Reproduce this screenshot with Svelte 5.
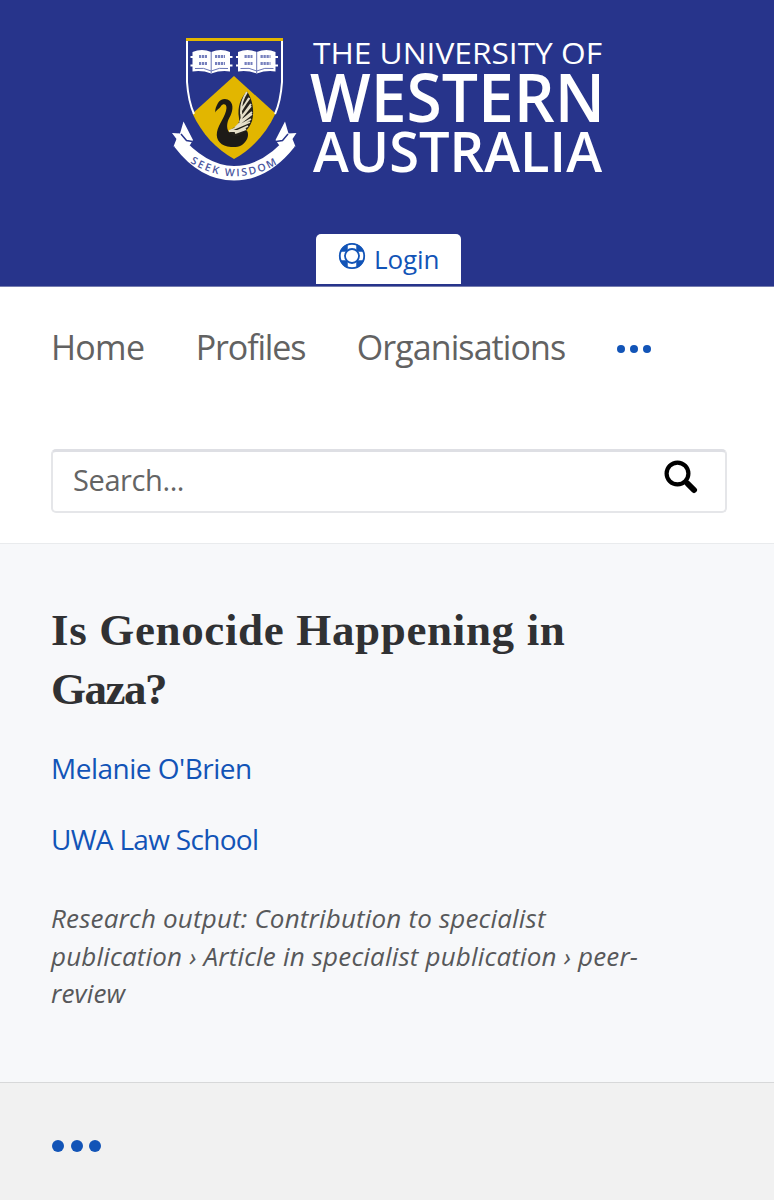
<script>
  const links = [
    { label: 'Home', spacing: -0.7 },
    { label: 'Profiles', spacing: -1.15 },
    { label: 'Organisations', spacing: -0.93 }
  ];
</script>

<header class="banner">
  <svg class="logo" width="434" height="154" viewBox="170 32 434 154" role="img" aria-label="The University of Western Australia">
    <path d="M187 38.500H282V82C281 119 262 145 234 159C206 145 188 119 187 82Z" fill="#27348b" />
    <path d="M234 76L275.500 113.500C266 134 252 149 234 159C216 149 202 134 192.500 113.500Z" fill="#e2b600" />
    <path d="M187 40V82C188 96 190 105 194 114M282 40V82C281 96 279 105 275 114" fill="none" stroke="#fff" stroke-width="2" />
    <path d="M186 39.500H283" stroke="#e2b600" stroke-width="3.200" />
    {#each [0, 45.5] as dx}
      <g transform="translate({dx} 0)">
        <path d="M192.500 52Q202 48 211.200 52Q221 48 230 52V71.500Q221 70 211.200 73.500Q202 70 192.500 71.500Z" fill="#fff" />
        <path d="M190.500 57H194M190.500 65.500H194M228 57H232.500M228 65.500H232.500" stroke="#fff" stroke-width="2" />
        <path d="M211.200 52V73M195 68.500Q204 67 211.200 71Q219 67 228 68.500" fill="none" stroke="#6974b5" stroke-width="1" />
        <path d="M199 56.500H207M199 63.500H207M215 56.500H225M215 63.500H225" stroke="#7680bd" stroke-width="3.200" stroke-dasharray="2.300 .7" />
      </g>
    {/each}
    <path d="M215.300 112.500C214.800 109 216.500 106 218 103C220.500 98.500 226.500 97.500 230 101C234 105 232.500 112 229.500 117.500C227 122 226 128 229 132C233 135 239 132 243 130C248 128 249.500 135 246.500 140C243 145.500 239 147.500 231 147C221 146.500 215.500 140 217 132C218.500 124 226 116 226.500 108C226.500 103.500 223 103.500 221 106C219.500 109 217 109 215.300 112.500Z" fill="#1d1b17" />
    <path d="M229 131C236 126 240 125 239 118C237 107 241 97 247 91.500C252 98 255 111 252 121C249 130 243 133 238 136C235 137 231 135 229 131Z" fill="#24211b" />
    <path d="M247 92C243 98 241 105 241 111L249 98M249.500 98L241 110L241.500 117L251 104M251 106L242 117L240 122L252 112M252 114L239 124L235 128L251 119M250 122L229 131L237 131L248 126M246 129L235 133" fill="none" stroke="#e5dfc9" stroke-width="1.900" />
    <path d="M183.500 121.500L180 133.500L172 133L176.500 139L173.500 146.500L190 145L193 140Z" fill="#fff" />
    <path d="M285 121.500L288.500 133.500L296.500 133L292.500 139L295.500 146.500L279 145L275.500 140Z" fill="#fff" />
    <path d="M178.500 133.500Q206 166 234 166Q264 166 290 133.500L294.500 147Q268 180.500 234 180.500Q200 180.500 174.500 147Z" fill="#fff" />
    <path d="M181 134L186.500 140.500L192.500 141.500M288 134L282.500 140.500L276 141.500" fill="none" stroke="#27348b" stroke-width="1.500" />
    <path id="motto" d="M190 162.500Q235 190 280 162.500" fill="none" />
    <text class="motto"><textPath href="#motto" textLength="92">SEEK WISDOM</textPath></text>
    <g class="wordmark">
      <text x="313" y="63.500" font-size="30" textLength="289" lengthAdjust="spacingAndGlyphs">THE UNIVERSITY OF</text>
      <text class="heavy" x="310" y="121.500" font-size="67" textLength="295" lengthAdjust="spacingAndGlyphs">WESTERN</text>
      <text class="heavy" x="313" y="172" font-size="56.500" textLength="289" lengthAdjust="spacingAndGlyphs">AUSTRALIA</text>
    </g>
  </svg>
  <a class="login">
    <svg width="28" height="28" viewBox="0 0 28 28" fill="none">
      <circle cx="14" cy="14" r="9.500" stroke="#1254b7" stroke-width="6.500" />
      <path d="M14 1.500V8M14 20V26.500M1.500 14H8M20 14H26.500" stroke="#fff" stroke-width="8.500" />
      <circle cx="14" cy="14" r="12.200" stroke="#1254b7" stroke-width="1.800" />
      <circle cx="14" cy="14" r="7" fill="#fff" stroke="#1254b7" stroke-width="1.800" />
    </svg>
    <span>Login</span>
  </a>
</header>

<nav>
  {#each links as link}
    <a style="letter-spacing: {link.spacing}px">{link.label}</a>
  {/each}
  <span class="dots small"><i></i><i></i><i></i></span>
</nav>

<div class="search-area">
  <div class="search">
    <span>Search...</span>
    <svg width="34" height="34" viewBox="0 0 34 34" fill="none" stroke="#000">
      <circle cx="13.500" cy="13.500" r="10.900" stroke-width="4.200" />
      <path d="M21 21L23 23" stroke-width="4.500" />
      <path d="M24 24L30 30" stroke-width="6" stroke-linecap="round" />
    </svg>
  </div>
</div>

<main>
  <h1>Is Genocide Happening in<br /><span>Gaza?</span></h1>
  <p class="link author">Melanie O'Brien</p>
  <p class="link school">UWA Law School</p>
  <p class="kind"><span>Research output: Contribution to specialist</span><span>publication › Article in specialist publication › peer-</span><span>review</span></p>
</main>

<footer><span class="dots"><i></i><i></i><i></i></span></footer>

<style>
  :global(body) { background: #fff; }
  header, nav, .search-area, main, footer { box-sizing: border-box; font-family: "Open Sans", sans-serif; }
  .banner { height: 287px; background: #27348b; display: flex; flex-direction: column; align-items: center; padding: 32px 0 2px; border-bottom: 1px solid #767daf; justify-content: space-between; }
  .logo { display: block; overflow: visible; }
  .wordmark { fill: #fff; font-family: "Open Sans", sans-serif; font-weight: 500; }
  .heavy { font-weight: 600; }
  .motto { fill: #4b569e; font: 600 10.500px "Open Sans", sans-serif; }
  .login { box-sizing: border-box; margin-left: 3px; width: 145px; height: 50px; display: flex; gap: 8px; padding: 8px 0 0 22px; background: #fff; border-radius: 5px 5px 0 0; color: #1254b7; font-size: 26px; line-height: 34px; letter-spacing: -.1px; }
  .login svg { flex: none; }
  nav { height: 162px; padding: 36px 52px 0 51px; display: flex; align-items: flex-start; gap: 51.5px; color: #626262; font-size: 34px; line-height: 48px; }
  .dots { display: flex; gap: 6.5px; }
  .dots i { width: 12px; height: 12px; border-radius: 50%; background: #1254b7; }
  .dots.small { gap: 4.5px; padding-top: 21.500px; }
  .dots.small i { width: 8.500px; height: 8.500px; }
  .search-area { height: 95px; padding: 0 47px 0 51px; border-bottom: 1px solid #e9ebed; }
  .search { box-sizing: border-box; height: 64px; border: 2px solid #e5e6e9; border-top: 3px solid #dedfe4; border-radius: 5px; display: flex; justify-content: space-between; padding: 8px 27px 0 20px; color: #646464; font-size: 29px; line-height: 40px; letter-spacing: -.4px; }
  main { height: 538px; background: #f7f8fa; padding: 57px 51px 0; }
  h1 { margin: 0; color: #303133; font: 700 45px/58.500px "Liberation Serif", serif; letter-spacing: .65px; }
  h1 span { letter-spacing: -1.5px; }
  p { margin: 0; }
  .link { color: #1254b7; font-size: 28px; line-height: 40px; letter-spacing: -.5px; }
  .author { margin-top: 30px; }
  .school { margin-top: 31px; letter-spacing: -.7px; }
  .kind { margin-top: 41px; color: #57585a; font-size: 26px; line-height: 37.500px; font-style: italic; letter-spacing: .17px; white-space: nowrap; }
  .kind span { display: block; }
  footer { height: 118px; background: #f1f1f1; border-top: 1px solid #d7d8d9; padding: 57px 52px; }
</style>
